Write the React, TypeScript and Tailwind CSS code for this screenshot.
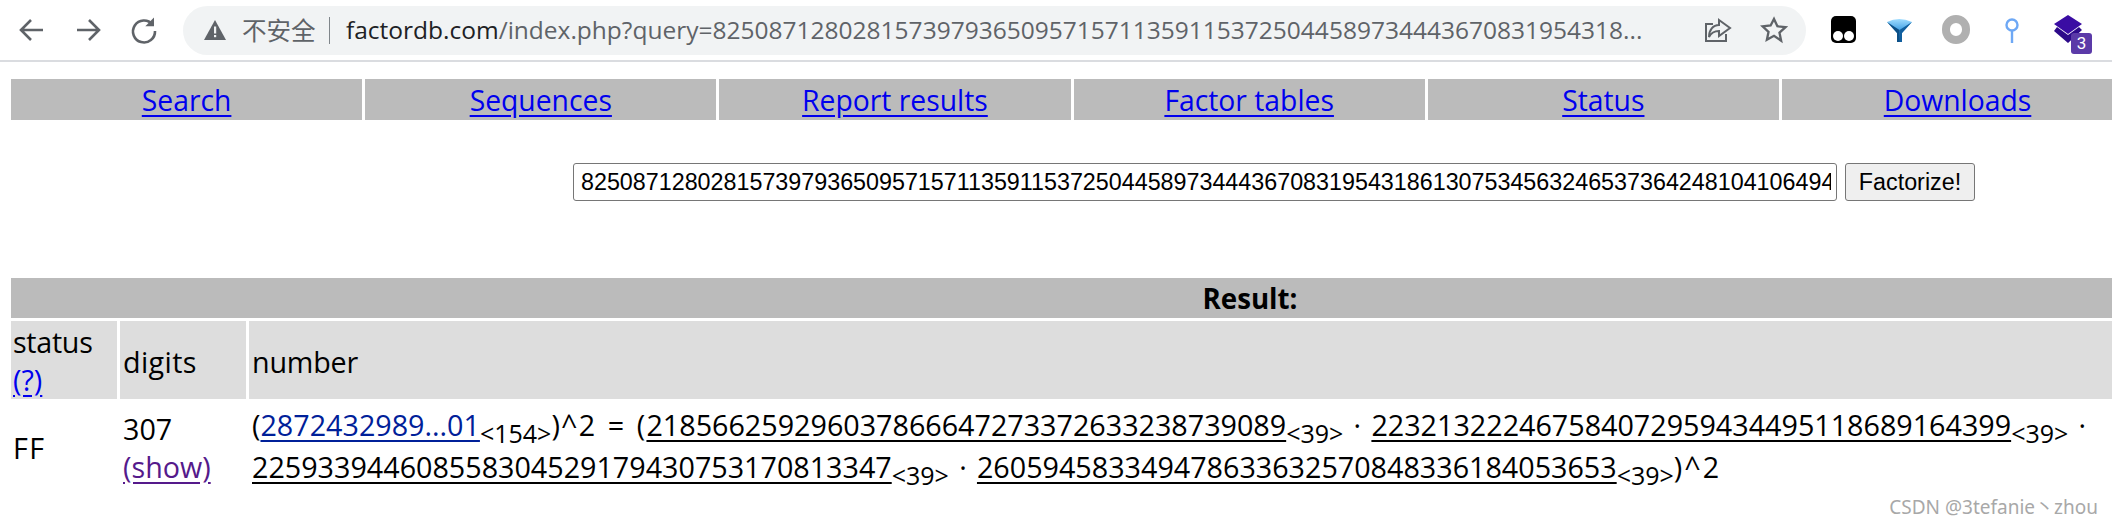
import React from "react";

const sans = "font-['Open_Sans','Noto_Sans',sans-serif]";

function Sub({ d }: { d: string }) {
  return <sub className="text-[25px] bottom-[-7px]">&lt;{d}&gt;</sub>;
}

function Factor({ n, d }: { n: string; d: string }) {
  return (
    <>
      <span className="underline decoration-[2px] underline-offset-[4px]">{n}</span>
      <Sub d={d} />
    </>
  );
}

function NavCell({ label }: { label: string }) {
  return (
    <div className="w-[351.2px] shrink-0 h-[41px] pt-[1px] bg-[#bbbbbb] flex items-center justify-center">
      <a href="#" className="text-[#0000ee] text-[28.3px] underline underline-offset-[4px]">{label}</a>
    </div>
  );
}

function Toolbar() {
  return (
    <div className="h-[62px] border-b-[2px] border-[#dadce0] bg-white flex items-center relative text-[#5f6368]">
      <div className="w-[183px] shrink-0 flex items-center pl-[16px] gap-[24px]">
        <svg width="32" height="32" viewBox="0 0 32 32" fill="none" stroke="#5f6368" strokeWidth="2.6"><path d="M27 16H6M15 6 5 16l10 10" /></svg>
        <svg width="32" height="32" viewBox="0 0 32 32" fill="none" stroke="#5f6368" strokeWidth="2.6"><path d="M5 16h21M17 6l10 10-10 10" /></svg>
        <svg width="32" height="32" viewBox="0 0 32 32" fill="none" stroke="#5f6368" strokeWidth="2.6"><path d="M24.5 10.5A11 11 0 1 0 27 17" /><path d="M26 3.5v8.7h-8.7z" fill="#5f6368" stroke="none" /></svg>
      </div>
      <div className="w-[1623px] h-[49px] shrink-0 rounded-full bg-[#f1f3f4] flex items-center pl-[21px] relative">
        <svg width="22" height="20" viewBox="0 0 22 20" className="shrink-0"><path d="M11 0 22 20H0z" fill="#5f6368" /><rect x="10" y="6.5" width="2.2" height="7" fill="#f1f3f4" /><rect x="10" y="15" width="2.2" height="2.2" fill="#f1f3f4" /></svg>
        <span className="ml-[16px] text-[24.5px] leading-none font-['Noto_Sans_CJK_SC',sans-serif]">不安全</span>
        <span className="ml-[13px] w-[1.5px] h-[27px] bg-[#80868b]" />
        <span className={`ml-[16px] text-[24.5px] whitespace-nowrap ${sans}`}>
          <span className="text-[#202124]">factordb.com</span>/index.php?query=82508712802815739793650957157113591153725044589734443670831954318...
        </span>
        <svg width="30" height="30" viewBox="0 0 30 30" fill="none" stroke="#5f6368" strokeWidth="2" className="absolute left-[1520px]"><path d="M23 19v7H3V9h7" /><path d="M16 5l11 8-11 8v-5c-5 0-8 2-10 6 0-7 4-12 10-12z" /></svg>
        <svg width="28" height="28" viewBox="0 0 24 24" fill="none" stroke="#5f6368" strokeWidth="2" className="absolute left-[1577px]"><path d="M12 2.5l2.9 6.3 6.9.8-5.1 4.7 1.4 6.8L12 17l-6.1 3.4 1.4-6.8-5.1-4.7 6.9-.8z" /></svg>
      </div>
      <div className="flex-1 relative h-full">
        <svg width="25" height="27" viewBox="0 0 25 27" className="absolute left-[25px] top-[16px]"><rect width="25" height="27" rx="5" fill="#000" /><circle cx="7" cy="20" r="5" fill="#fff" /><circle cx="18" cy="20" r="5" fill="#fff" /></svg>
        <svg width="25" height="24" viewBox="0 0 25 24" className="absolute left-[81px] top-[18px]">
          <defs><linearGradient id="fn" x1="0" y1="0" x2="0" y2="1"><stop offset="0" stopColor="#9fdcff" /><stop offset="0.5" stopColor="#3f9fe4" /><stop offset="1" stopColor="#0c4f86" /></linearGradient></defs>
          <path d="M0 4Q12-2 25 4L15 15v9h-5v-9z" fill="url(#fn)" />
          <path d="M0 4 10 15v9h2.5V12z" fill="#0c4f86" />
          <path d="M25 4 15 15v9h-2.5V12z" fill="#115f9e" />
        </svg>
        <div className="absolute left-[136px] top-[15px] w-[28px] h-[29px] rounded-full border-[8px] border-[#b0b0b0]" />
        <svg width="16" height="26" viewBox="0 0 16 26" className="absolute left-[198px] top-[18px]" fill="none" stroke="#6ea8f5" strokeWidth="2.4"><circle cx="8" cy="7" r="5.5" /><path d="M8 12.5V25" /></svg>
        <svg width="30" height="28" viewBox="0 0 30 28" className="absolute left-[247px] top-[15px]"><path d="M15 0 29 9 15 19 1 9z" fill="#3a0ca3" /><path d="M4 12 15 20 26 12 29 15 15 28 1 16z" fill="#2d0a8a" /></svg>
        <div className="absolute left-[265px] top-[33px] w-[21px] h-[21px] rounded-[3px] bg-[#5b3aa8] text-white text-[17px] leading-[21px] text-center font-['Roboto',sans-serif]">3</div>
      </div>
    </div>
  );
}

export default function App() {
  return (
    <div className={`w-[2112px] h-[522px] overflow-hidden bg-white text-black relative text-[28.7px] ${sans}`}>
      <Toolbar />

      <div className="mt-[17px] ml-[11px] flex gap-[3px]">
        {["Search", "Sequences", "Report results", "Factor tables", "Status", "Downloads"].map((l) => (
          <NavCell key={l} label={l} />
        ))}
      </div>

      <form className="mt-[43px] ml-[573px] flex gap-[8px] font-['Liberation_Sans',Arial,sans-serif] text-[23.3px]">
        <input
          readOnly
          value="82508712802815739793650957157113591153725044589734443670831954318613075345632465373642481041064941"
          className="w-[1264px] h-[38px] pl-[7px] pr-[5px] border border-[#767676] rounded-[3px] outline-none bg-white text-black"
        />
        <button type="button" className="w-[130px] h-[38px] border border-[#767676] rounded-[3px] bg-[#efefef] text-black">
          Factorize!
        </button>
      </form>

      <div className="mt-[77px] ml-[11px] w-[2478px]">
        <div className="h-[40px] bg-[#bbbbbb] flex items-center justify-center font-bold">
          <span className="text-[27.7px] pt-[2px]">Result:</span>
        </div>
        <div className="mt-[3px] h-[78px] flex gap-[3px]">
          <div className="w-[106px] shrink-0 bg-[#dddddd] pl-[2px] pt-[2px] flex flex-col justify-center leading-[38px]">
            <span className="tracking-[-0.3px]">status</span>
            <a href="#" className="text-[#0000ee] underline underline-offset-[4px]">(?)</a>
          </div>
          <div className="w-[126px] shrink-0 bg-[#dddddd] pl-[3px] pt-[3px] flex items-center tracking-[0.4px]">digits</div>
          <div className="flex-1 bg-[#dddddd] pl-[3px] pt-[3px] flex items-center tracking-[-0.2px]">number</div>
        </div>
        <div className="flex gap-[3px] pt-[11px] leading-[38px]">
          <div className="w-[106px] shrink-0 pl-[2px] flex items-center tracking-[1.5px]">FF</div>
          <div className="w-[126px] shrink-0 pl-[3px] flex flex-col">
            <span>307</span>
            <a href="#" className="text-[#551a8b] underline underline-offset-[4px]">(show)</a>
          </div>
          <div className="flex-1 pl-[3px] whitespace-nowrap [word-spacing:2.8px]">
            <div className="mt-[-4px] mb-[4px]">
              (<a href="#" className="text-[#002099] underline decoration-[2px] underline-offset-[4px]">2872432989...01</a><Sub d="154" /><span className="tracking-[1.2px]">)^2 = (</span><Factor n="218566259296037866647273372633238739089" d="39" /> · <Factor n="223213222467584072959434495118689164399" d="39" /> ·
            </div>
            <div>
              <Factor n="225933944608558304529179430753170813347" d="39" /> · <Factor n="260594583349478633632570848336184053653" d="39" /><span className="tracking-[2px]">)^2</span>
            </div>
          </div>
        </div>
      </div>

      <div className="absolute right-[14px] bottom-[1px] text-[19px] text-[#a8a8a8] font-['Noto_Sans','Noto_Sans_CJK_SC',sans-serif]">CSDN @3tefanie丶zhou</div>
    </div>
  );
}
